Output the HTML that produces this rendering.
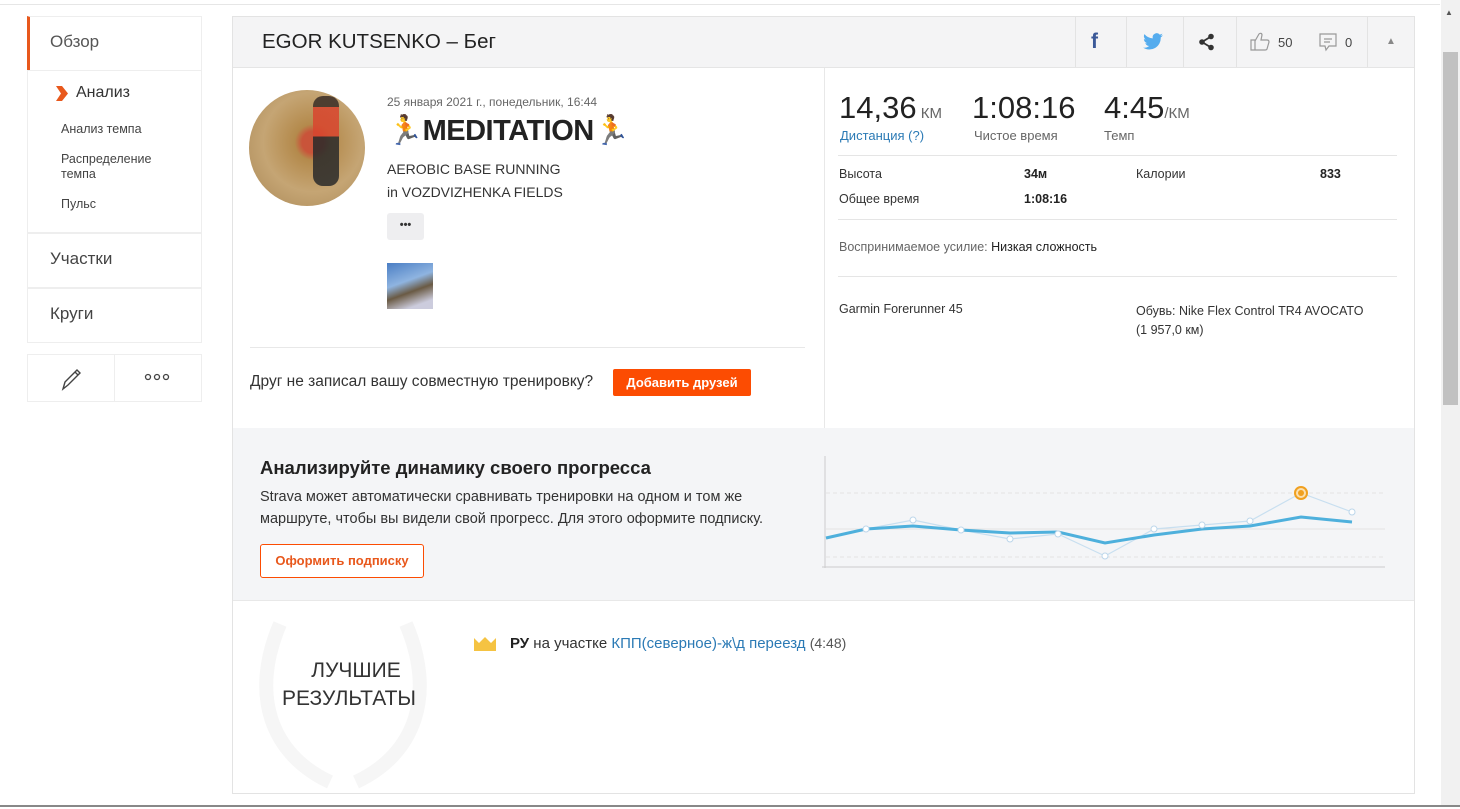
<!DOCTYPE html>
<html><head><meta charset="utf-8"><style>
*{box-sizing:border-box;margin:0;padding:0}
body{width:1460px;height:809px;background:#fff;font-family:"Liberation Sans","Noto Sans CJK SC",sans-serif;color:#333;position:relative;overflow:hidden}
.a{position:absolute}
.box{position:absolute;border:1px solid #eee;background:#fff}
.t{position:absolute;white-space:nowrap}
</style></head><body>
<div class="a" style="left:0;top:4px;width:1440px;height:1px;background:#e6e6e6"></div>
<div class="a" style="left:0;top:805px;width:1460px;height:2px;background:#888"></div>
<div class="a" style="left:1441px;top:0;width:19px;height:805px;background:#f1f1f1"></div>
<div class="a" style="left:1443px;top:52px;width:15px;height:353px;background:#c1c1c1"></div>
<div class="t" style="left:1445px;top:8px;font-size:8px;color:#555">▲</div>

<div class="box" style="left:27px;top:16px;width:175px;height:55px;border-left:3px solid #e8581c"></div>
<div class="t" style="left:50px;top:32px;font-size:17px;color:#555">Обзор</div>
<div class="box" style="left:27px;top:70px;width:175px;height:163px"></div>
<svg class="a" style="left:56px;top:86px" width="12" height="15"><path d="M0 0h6l6 7.5-6 7.5H0l5-7.5z" fill="#e8581c"/></svg>
<div class="t" style="left:76px;top:84px;font-size:16px;color:#333">Анализ</div>
<div class="t" style="left:61px;top:122px;font-size:12.5px;color:#444">Анализ темпа</div>
<div class="t" style="left:61px;top:152px;font-size:12.5px;color:#444;line-height:15px">Распределение<br>темпа</div>
<div class="t" style="left:61px;top:197px;font-size:12.5px;color:#444">Пульс</div>
<div class="box" style="left:27px;top:233px;width:175px;height:55px"></div>
<div class="t" style="left:50px;top:249px;font-size:17px;color:#444">Участки</div>
<div class="box" style="left:27px;top:288px;width:175px;height:55px"></div>
<div class="t" style="left:50px;top:304px;font-size:17px;color:#444">Круги</div>
<div class="box" style="left:27px;top:354px;width:88px;height:48px"></div>
<div class="box" style="left:114px;top:354px;width:88px;height:48px"></div>
<svg class="a" style="left:59px;top:365px" width="26" height="26" fill="none" stroke="#444" stroke-width="1.4"><path d="M4 24l2-7L18 5l3 3L9 20z M4 24l5-4 M16 7l3 3"/></svg>
<svg class="a" style="left:144px;top:373px" width="28" height="8" fill="none" stroke="#444" stroke-width="1.3"><circle cx="4" cy="4" r="2.5"/><circle cx="13" cy="4" r="2.5"/><circle cx="22" cy="4" r="2.5"/></svg>

<div class="box" style="left:232px;top:16px;width:1183px;height:778px;border-color:#e3e3e3"></div>
<div class="a" style="left:233px;top:17px;width:1181px;height:51px;background:#f4f4f5;border-bottom:1px solid #e5e5e5"></div>
<div class="t" style="left:262px;top:30px;font-size:20.5px;color:#222">EGOR KUTSENKO – Бег</div>
<div class="a" style="left:1075px;top:17px;width:1px;height:50px;background:#e3e3e3"></div>
<div class="a" style="left:1126px;top:17px;width:1px;height:50px;background:#e3e3e3"></div>
<div class="a" style="left:1183px;top:17px;width:1px;height:50px;background:#e3e3e3"></div>
<div class="a" style="left:1236px;top:17px;width:1px;height:50px;background:#e3e3e3"></div>
<div class="a" style="left:1367px;top:17px;width:1px;height:50px;background:#e3e3e3"></div>
<div class="t" style="left:1091px;top:30px;font-size:21px;font-weight:bold;color:#3b5998">f</div>
<svg class="a" style="left:1142px;top:33px" width="22" height="18" viewBox="0 0 24 20"><path d="M23 2.5c-.8.4-1.7.6-2.6.7.9-.6 1.7-1.5 2-2.5-.9.5-1.9.9-2.9 1.1A4.5 4.5 0 0 0 11.8 6 12.8 12.8 0 0 1 2.5 1.3a4.5 4.5 0 0 0 1.4 6c-.7 0-1.4-.2-2-.6 0 2.2 1.5 4 3.6 4.5-.7.2-1.4.2-2 .1.6 1.8 2.2 3.1 4.2 3.1A9 9 0 0 1 1 16.3a12.7 12.7 0 0 0 19.6-11.4c.9-.6 1.7-1.4 2.4-2.4z" fill="#55acee"/></svg>
<svg class="a" style="left:1198px;top:33px" width="18" height="18"><g fill="#333"><circle cx="13" cy="3.5" r="2.8"/><circle cx="4" cy="9" r="2.8"/><circle cx="13" cy="14.5" r="2.8"/></g><path d="M13 3.5L4 9l9 5.5" stroke="#333" stroke-width="1.8" fill="none"/></svg>
<svg class="a" style="left:1249px;top:30px" width="22" height="22" fill="none" stroke="#999" stroke-width="1.2"><path d="M2 10h4v10H2z M6 11l4-7c1-1 3-1 3 1l-1 5h6c1.5 0 2 1 2 2l-2 7c-.3 1-1 1-2 1H6"/></svg>
<div class="t" style="left:1278px;top:35px;font-size:13px;color:#444">50</div>
<svg class="a" style="left:1318px;top:32px" width="20" height="20" fill="none" stroke="#999" stroke-width="1.2"><path d="M2 2h16v12h-7l-3 4-1-4H2z M6 7h8 M6 10h6"/></svg>
<div class="t" style="left:1345px;top:35px;font-size:13px;color:#444">0</div>
<div class="t" style="left:1386px;top:36px;font-size:10px;color:#888">▲</div>

<div class="a" style="left:249px;top:90px;width:116px;height:116px;border-radius:50%;background:radial-gradient(circle at 55% 45%,#c9543a 0 12%,#b48a4c 20%,#c5a574 55%,#a88654 100%)"></div>
<div class="a" style="left:313px;top:96px;width:26px;height:90px;background:linear-gradient(#3a2d26 0 12%,#d9452e 12% 45%,#2a2a2a 45% 100%);border-radius:10px;opacity:.85"></div>
<div class="t" style="left:387px;top:95px;font-size:12px;color:#666">25 января 2021 г., понедельник, 16:44</div>
<div class="t" style="left:387px;top:114px;font-size:29px;font-weight:bold;color:#222;letter-spacing:-.5px">🏃MEDITATION🏃</div>
<div class="t" style="left:387px;top:161px;font-size:14px;color:#333">AEROBIC BASE RUNNING</div>
<div class="t" style="left:387px;top:184px;font-size:14px;color:#333">in VOZDVIZHENKA FIELDS</div>
<div class="a" style="left:387px;top:213px;width:37px;height:27px;background:#eeeef0;border-radius:3px;font-size:11px;text-align:center;line-height:24px;font-weight:bold;color:#333">•••</div>
<div class="a" style="left:387px;top:263px;width:46px;height:46px;background:linear-gradient(160deg,#4a7ec4,#8fb4e0 40%,#6a5a44 60%,#ccd 85%)"></div>
<div class="a" style="left:250px;top:347px;width:555px;height:1px;background:#e8e8e8"></div>
<div class="t" style="left:250px;top:373px;font-size:15.5px;color:#333">Друг не записал вашу совместную тренировку?</div>
<div class="a" style="left:613px;top:369px;width:138px;height:27px;background:#fc4c02;border-radius:2px;color:#fff;font-size:13px;font-weight:bold;text-align:center;line-height:27px">Добавить друзей</div>
<div class="a" style="left:824px;top:68px;width:1px;height:360px;background:#e8e8e8"></div>

<div class="t" style="left:839px;top:90px;font-size:31px;color:#222">14,36<span style="font-size:15px;color:#666"> КМ</span></div>
<div class="t" style="left:972px;top:90px;font-size:31px;color:#222">1:08:16</div>
<div class="t" style="left:1104px;top:90px;font-size:31px;color:#222">4:45<span style="font-size:15px;color:#666">/КМ</span></div>
<div class="t" style="left:840px;top:128px;font-size:13px;color:#2b7ab5">Дистанция (?)</div>
<div class="t" style="left:974px;top:128px;font-size:13px;color:#666">Чистое время</div>
<div class="t" style="left:1104px;top:128px;font-size:13px;color:#666">Темп</div>
<div class="a" style="left:838px;top:155px;width:559px;height:1px;background:#e5e5e5"></div>
<div class="t" style="left:839px;top:167px;font-size:12.5px;color:#333">Высота</div>
<div class="t" style="left:1024px;top:167px;font-size:12.5px;font-weight:bold;color:#222">34м</div>
<div class="t" style="left:1136px;top:167px;font-size:12.5px;color:#333">Калории</div>
<div class="t" style="left:1320px;top:167px;font-size:12.5px;font-weight:bold;color:#222">833</div>
<div class="t" style="left:839px;top:192px;font-size:12.5px;color:#333">Общее время</div>
<div class="t" style="left:1024px;top:192px;font-size:12.5px;font-weight:bold;color:#222">1:08:16</div>
<div class="a" style="left:838px;top:219px;width:559px;height:1px;background:#e5e5e5"></div>
<div class="t" style="left:839px;top:240px;font-size:12.5px;color:#666">Воспринимаемое усилие: <span style="color:#222">Низкая сложность</span></div>
<div class="a" style="left:838px;top:276px;width:559px;height:1px;background:#e5e5e5"></div>
<div class="t" style="left:839px;top:302px;font-size:12.5px;color:#333">Garmin Forerunner 45</div>
<div class="t" style="left:1136px;top:302px;font-size:12.5px;color:#333;line-height:19px">Обувь: Nike Flex Control TR4 AVOCATO<br>(1 957,0 км)</div>

<div class="a" style="left:233px;top:428px;width:1181px;height:172px;background:#f4f5f7"></div>
<div class="t" style="left:260px;top:457px;font-size:18.5px;font-weight:bold;color:#222">Анализируйте динамику своего прогресса</div>
<div class="t" style="left:260px;top:486px;font-size:14.5px;color:#333;line-height:22px">Strava может автоматически сравнивать тренировки на одном и том же<br>маршруте, чтобы вы видели свой прогресс. Для этого оформите подписку.</div>
<div class="a" style="left:260px;top:544px;width:164px;height:34px;border:1px solid #fc4c02;border-radius:3px;background:#fff;color:#e8581c;font-size:13px;font-weight:bold;text-align:center;line-height:32px">Оформить подписку</div>
<svg class="a" style="left:820px;top:450px" width="580" height="130" viewBox="820 450 580 130">
<path d="M825 456V568M822 567H1385" stroke="#ccc" stroke-width="1"/>
<path d="M826 493H1385M826 557H1385" stroke="#e3e3e3" stroke-dasharray="4 3"/>
<path d="M826 529H1385" stroke="#e3e3e3"/>
<polyline points="866,529 913,520 961,530 1010,539 1058,534 1105,556 1154,529 1202,525 1250,521 1301,493 1352,512" fill="none" stroke="#c8dff0" stroke-width="1.2"/>
<polyline points="826,538 866,529 913,526 961,530 1010,533 1058,532 1105,543 1154,535 1202,529 1250,526 1301,517 1352,522" fill="none" stroke="#4eb0dc" stroke-width="3"/>
<g fill="#fff" stroke="#bcd6ea" stroke-width="1"><circle cx="866" cy="529" r="3"/><circle cx="913" cy="520" r="3"/><circle cx="961" cy="530" r="3"/><circle cx="1010" cy="539" r="3"/><circle cx="1058" cy="534" r="3"/><circle cx="1105" cy="556" r="3"/><circle cx="1154" cy="529" r="3"/><circle cx="1202" cy="525" r="3"/><circle cx="1250" cy="521" r="3"/><circle cx="1352" cy="512" r="3"/></g>
<circle cx="1301" cy="493" r="6" fill="#fbe0b0" stroke="#f0a020" stroke-width="2"/><circle cx="1301" cy="493" r="3" fill="#f0a020"/>
</svg>
<div class="a" style="left:233px;top:600px;width:1181px;height:1px;background:#e8e8e8"></div>

<svg class="a" style="left:250px;top:604px" width="186" height="185" fill="none" stroke="#f6f6f6" stroke-width="14"><path d="M80 178C20 150 0 90 30 20M106 178C166 150 186 90 156 20"/></svg>
<div class="t" style="left:296px;top:657px;font-size:21px;color:#333;text-align:center;line-height:28px">ЛУЧШИЕ<br><span style="margin-left:-14px">РЕЗУЛЬТАТЫ</span></div>
<svg class="a" style="left:473px;top:636px" width="24" height="15"><path d="M1 2l5 5 6-6 6 6 5-5v13H1z" fill="#f5c342"/></svg>
<div class="t" style="left:510px;top:635px;font-size:15px;color:#333"><b style="color:#222">РУ</b> на участке <span style="color:#2b7ab5">КПП(северное)-ж\д переезд</span> <span style="font-size:14px;color:#555">(4:48)</span></div>
</body></html>
